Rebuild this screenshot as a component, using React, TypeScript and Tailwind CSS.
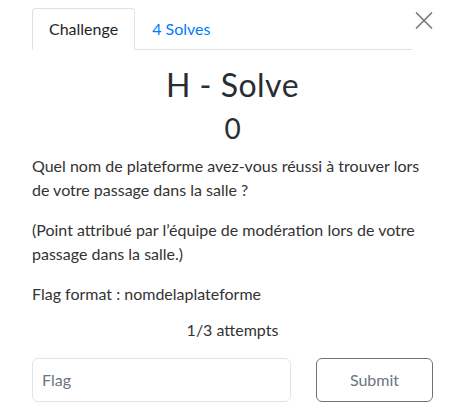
import { useState } from "react";

export default function App() {
  const [tab, setTab] = useState<"challenge" | "solves">("challenge");
  const [flag, setFlag] = useState("");

  return (
    <div className="w-[451px] h-[411px] bg-white text-[#212529] font-['Lato',sans-serif] pl-8 pr-[18px] pt-2 overflow-hidden">
      {/* tabs + close */}
      <div className="flex items-start">
        <ul className="flex flex-1 border-b border-[#dee2e6]">
          <li className="-mb-px">
            <button
              onClick={() => setTab("challenge")}
              className={
                tab === "challenge"
                  ? "block px-4 py-2 text-base leading-6 border border-[#dee2e6] border-b-white rounded-t bg-white text-[#212529]"
                  : "block px-4 py-2 text-base leading-6 border border-transparent rounded-t text-[#007bff]"
              }
            >
              Challenge
            </button>
          </li>
          <li className="-mb-px">
            <button
              onClick={() => setTab("solves")}
              className={
                tab === "solves"
                  ? "block px-4 py-2 text-base leading-6 border border-[#dee2e6] border-b-white rounded-t bg-white text-[#212529]"
                  : "block px-4 py-2 text-base leading-6 border border-transparent rounded-t text-[#007bff]"
              }
            >
              4 Solves
            </button>
          </li>
        </ul>
        <button className="ml-[3px] mt-[4px] w-[18px] h-[17px] text-[#7a7a7a]" aria-label="Close">
          <svg width="18" height="17" viewBox="0 0 18 17">
            <path d="M1 0.5 L17 16.5 M17 0.5 L1 16.5" stroke="currentColor" strokeWidth="1.6" />
          </svg>
        </button>
      </div>

      {/* challenge */}
      <h2 className="text-center text-[32px] leading-[1.2] font-normal tracking-[0.5px] text-[#2a2e33] pt-4 mb-2">H - Solve</h2>
      <h3 className="text-center text-[28px] leading-[1.2] font-normal text-[#2a2e33] mb-2">0</h3>

      <div className="text-base leading-6 text-[#333]">
        <p className="mb-4">
          Quel nom de plateforme avez-vous réussi à trouver lors de votre passage dans la salle ?
        </p>
        <p className="mb-4">
          (Point attribué par l’équipe de modération lors de votre passage dans la salle.)
        </p>
        <p className="mb-3">Flag format : nomdelaplateforme</p>
      </div>

      <p className="text-center text-base leading-6 text-[#333] mb-4">1/3 attempts</p>

      <div className="flex gap-[25px]">
        <input
          value={flag}
          onChange={(e) => setFlag(e.target.value)}
          placeholder="Flag"
          className="w-[259px] h-[44px] px-[9px] text-base border border-[#e2e4e8] rounded-md outline-none placeholder:text-[#6c757d] text-[#495057]"
        />
        <button className="flex-1 h-[44px] border border-[#6c757d] rounded-md text-base text-[#6c757d]">
          Submit
        </button>
      </div>
    </div>
  );
}
